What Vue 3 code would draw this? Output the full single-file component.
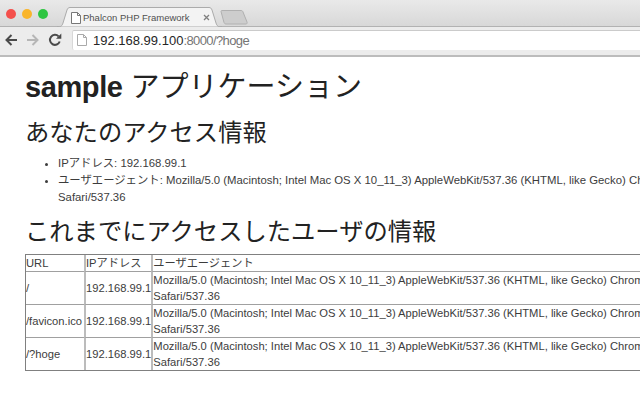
<template>
  <div class="window">
    <div class="tabstrip">
      <div class="lights">
        <span class="light red"></span>
        <span class="light yellow"></span>
        <span class="light green"></span>
      </div>
      <div class="tab">
        <svg class="tab-shape" width="165" height="20" viewBox="0 0 165 20">
          <path d="M0 20c4 0 5-1 6-4L10 3c.6-1.700 1.500-2.500 3-2.500h139c1.500 0 2.400.8 3 2.500l4 13c1 3 2 4 6 4z" fill="#f3f3f3" stroke="#ababab" />
        </svg>
        <svg class="page-icon" width="10" height="12" viewBox="0 0 10 12">
          <path d="M.5.5h6l3 3v8H.5z" fill="#fff" stroke="#777" />
          <path d="M6.500.5v3h3" fill="none" stroke="#777" />
        </svg>
        <span class="tab-title">Phalcon PHP Framework</span>
        <svg class="tab-close" width="7" height="7" viewBox="0 0 7 7">
          <path d="M1 1l5 5M6 1L1 6" fill="none" stroke="#808080" stroke-width="1.300" />
        </svg>
      </div>
      <svg class="new-tab" width="28" height="15" viewBox="0 0 28 15">
        <path d="M1 1.500c0-.6.4-1 1-1h19c1 0 1.600.4 2 1.500l4 10c.4 1 0 2-1 2H6c-1 0-1.600-.6-2-1.500z" fill="#cdcdcd" stroke="#b0b0b0" />
      </svg>
    </div>

    <div class="toolbar">
      <svg class="nav-icon" width="14" height="14" viewBox="0 0 14 14">
        <path d="M13 7H3M7.500 2 2.500 7l5 5" fill="none" stroke="#4a4a4a" stroke-width="2" />
      </svg>
      <svg class="nav-icon" width="14" height="14" viewBox="0 0 14 14">
        <path d="M1 7h10M6.500 2l5 5-5 5" fill="none" stroke="#b6b6b6" stroke-width="2" />
      </svg>
      <svg class="nav-icon" width="14" height="14" viewBox="0 0 14 14">
        <path d="M11.700 8.500A5 5 0 1 1 10.600 3.400" fill="none" stroke="#4a4a4a" stroke-width="2" />
        <path d="M8 5.700h5.300V.4z" fill="#4a4a4a" />
      </svg>
      <div class="omnibox">
        <svg width="10" height="12" viewBox="0 0 10 12">
          <path d="M.5.500h6l3 3v8H.5z" fill="#fff" stroke="#aaa" />
          <path d="M6.500.5v3h3" fill="none" stroke="#aaa" />
        </svg>
        <span class="url"><span class="host">192.168.99.100</span><span class="rest">:8000/?hoge</span></span>
      </div>
    </div>

    <main class="page">
      <h1><b>sample</b> アプリケーション</h1>
      <h2 class="first">あなたのアクセス情報</h2>
      <ul>
        <li>IPアドレス: 192.168.99.1</li>
        <li>ユーザエージェント: {{ userAgent }}</li>
      </ul>
      <h2>これまでにアクセスしたユーザの情報</h2>
      <table>
        <thead>
          <tr>
            <td>URL</td>
            <td>IPアドレス</td>
            <td>ユーザエージェント</td>
          </tr>
        </thead>
        <tbody>
          <tr v-for="url in urls" :key="url">
            <td>{{ url }}</td>
            <td>192.168.99.1</td>
            <td>{{ userAgent }}</td>
          </tr>
        </tbody>
      </table>
    </main>
  </div>
</template>

<script setup>
const userAgent = 'Mozilla/5.0 (Macintosh; Intel Mac OS X 10_11_3) AppleWebKit/537.36 (KHTML, like Gecko) Chrome/48.0.2564.116 Safari/537.36'
const urls = ['/', '/favicon.ico', '/?hoge']
</script>

<style>
html, body {
  margin: 0;
  overflow: hidden;
  background: #fff;
}
</style>

<style scoped>
.window {
  width: 640px;
  height: 407px;
  overflow: hidden;
  font-family: "Liberation Sans", "Noto Sans CJK JP", sans-serif;
}

.tabstrip {
  height: 27px;
  display: flex;
  align-items: flex-end;
  background: linear-gradient(#e9e9e9, #d8d8d8);
  border-bottom: 1px solid #b2b2b2;
  box-sizing: border-box;
}

.lights {
  display: flex;
  gap: 6px;
  padding: 0 0 7px 6px;
}

.light {
  width: 10px;
  height: 10px;
  border-radius: 50%;
}

.red { background: #f4504c; }
.yellow { background: #f9b52c; }
.green { background: #2ec542; }

.tab {
  position: relative;
  width: 165px;
  height: 20px;
  margin: 0 0 -1px 9px;
  padding: 1px 0 0 14px;
  display: flex;
  align-items: center;
  box-sizing: border-box;
}

.tab-shape {
  position: absolute;
  left: 0;
  top: 0;
}

.page-icon {
  position: relative;
  flex: none;
}

.tab-title {
  position: relative;
  width: 120px;
  margin-left: 2px;
  font-size: 9.500px;
  color: #505050;
  white-space: nowrap;
}

.tab-close {
  position: relative;
  flex: none;
}

.new-tab {
  flex: none;
  margin: 0 0 1px -2px;
}

.toolbar {
  height: 30px;
  display: flex;
  align-items: center;
  gap: 8px;
  padding: 0 0 3px 4px;
  box-sizing: border-box;
  background: #ececec;
  border-bottom: 2px solid #bcbcbc;
}

.nav-icon {
  flex: none;
}

.omnibox {
  flex: 1;
  height: 19px;
  margin-left: 2px;
  display: flex;
  align-items: center;
  gap: 6px;
  padding-left: 4px;
  background: #fff;
  border-top: 1px solid #cbcbcb;
  border-left: 1px solid #d8d8d8;
  border-radius: 2px 0 0 2px;
}

.url {
  font-size: 13px;
  white-space: nowrap;
}

.host {
  color: #262626;
}

.rest {
  color: #757575;
  letter-spacing: -0.6px;
}

.page {
  width: 740px;
  padding-left: 25px;
  color: #3c3c3c;
  font-size: 11.350px;
  line-height: 17px;
}

h1 {
  margin: 10px 0 0;
  font-size: 29px;
  line-height: 40px;
  font-weight: 400;
  color: #222;
}

h1 b {
  font-weight: 700;
  letter-spacing: -0.4px;
}

h2 {
  margin: 0;
  font-size: 24.300px;
  line-height: 34px;
  font-weight: 400;
  color: #222;
}

h2.first {
  margin-top: 9px;
}

ul {
  margin: 5px 0 9px;
  padding-left: 33px;
}

table {
  width: 100%;
  margin-top: 5px;
  border-collapse: separate;
  border-spacing: 0;
  border: 1px solid #808080;
  font-size: 11.200px;
  line-height: 16px;
}

td {
  padding: 0;
  border-left: 2px solid #bcbcbc;
  border-top: 1px solid #a0a0a0;
}

td:first-child {
  width: 58px;
  border-left: 0;
}

thead td {
  border-top: 0;
}
</style>
